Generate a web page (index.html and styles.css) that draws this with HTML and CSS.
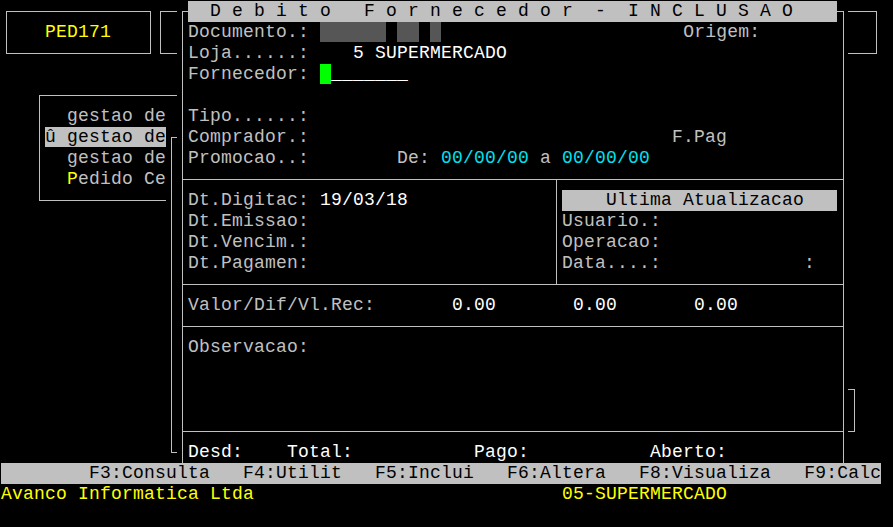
FILE: index.html
```html
<!DOCTYPE html>
<html lang="pt">
<head>
    <meta charset="UTF-8">
    <title>PED171 - Debito Fornecedor</title>
    <link rel="stylesheet" href="styles.css">
</head>
<body>
    <div class="screen">
        <div class="desk">
            <!-- program box -->
            <div class="win box-ped">
                <div class="ln">   <span class="hot">PED171</span></div>
            </div>
            <div class="win box-app"></div>

            <!-- menu behind the dialog -->
            <div class="win menu">
                <div class="ln">  gestao de</div>
                <div class="ln"><span class="hl">û gestao de</span></div>
                <div class="ln">  gestao de</div>
                <div class="ln">  <span class="hot">P</span>edido Ce</div>
            </div>
            <div class="win submenu"></div>
            <div class="win popup"></div>

            <!-- Debito Fornecedor dialog -->
            <div class="win dialog">
                <div class="ln title">  D e b i t o   F o r n e c e d o r  -  I N C L U S A O    </div>
                <div class="ln">Documento.: <span class="mask">      </span> <span class="mask">  </span> <span class="mask"> </span>                      Origem:</div>
                <div class="ln">Loja......:    <span class="val">5 SUPERMERCADO</span></div>
                <div class="ln">Fornecedor: <span class="cursor"> </span><span class="val">_______</span></div>
                <div class="ln"></div>
                <div class="ln">Tipo......:</div>
                <div class="ln">Comprador.:                                 F.Pag</div>
                <div class="ln">Promocao..:        De: <span class="date">00/00/00</span> a <span class="date">00/00/00</span></div>
                <div class="sep"></div>
                <div class="split">
                    <div class="col-left">
                        <div class="ln">Dt.Digitac: <span class="val">19/03/18</span></div>
                        <div class="ln">Dt.Emissao:</div>
                        <div class="ln">Dt.Vencim.:</div>
                        <div class="ln">Dt.Pagamen:</div>
                    </div>
                    <div class="divider"></div>
                    <div class="col-right">
                        <div class="ln bar">    Ultima Atualizacao   </div>
                        <div class="ln">Usuario.:</div>
                        <div class="ln">Operacao:</div>
                        <div class="ln">Data....:             :</div>
                    </div>
                </div>
                <div class="sep"></div>
                <div class="ln">Valor/Dif/Vl.Rec:       <span class="val">0.00</span>       <span class="val">0.00</span>       <span class="val">0.00</span></div>
                <div class="sep"></div>
                <div class="ln">Observacao:</div>
                <div class="ln"></div>
                <div class="ln"></div>
                <div class="ln"></div>
                <div class="sep"></div>
                <div class="ln val">Desd:    Total:           Pago:           Aberto:</div>
            </div>
        </div>

        <div class="ln keys">        F3:Consulta   F4:Utilit   F5:Inclui   F6:Altera   F8:Visualiza   F9:Calc</div>
        <div class="ln status">Avanco Informatica Ltda                            05-SUPERMERCADO</div>
    </div>
</body>
</html>
```

FILE: styles.css
```css
/* Terminal screen: 80 columns x 25 rows, 11px x 21px cells */
* {
    margin: 0;
    padding: 0;
    box-sizing: border-box;
}

body {
    background-color: #000;
}

.screen {
    width: 880px;
    margin: 1px 0 0 1px;
    font-family: "Liberation Mono", monospace;
    font-size: 18px;
    letter-spacing: 0.2px;
    line-height: 21px;
    color: #c0c0c0;
}

/* one text row of the terminal */
.ln {
    height: 21px;
    white-space: pre;
}

/* Window area (rows 0-21) */
.desk {
    position: relative;
    height: 462px;
    overflow: hidden;
}

.win {
    position: absolute;
    background-color: #000;
    padding: 21px 11px 0 11px;
}

/* single line frame through the cell centres */
.win::before {
    content: "";
    position: absolute;
    left: 5px;
    top: 10px;
    right: 4px;
    bottom: 10px;
    border: 1px solid #c0c0c0;
    z-index: -1;
}

.box-ped {
    left: 0;
    top: 0;
    width: 154px;
    height: 63px;
    z-index: 1;
}

.box-app {
    left: 154px;
    top: 0;
    width: 726px;
    height: 63px;
    z-index: 1;
}

.menu {
    left: 33px;
    top: 84px;
    width: 198px;
    height: 126px;
    z-index: 2;
}

.submenu {
    left: 165px;
    top: 126px;
    width: 176px;
    height: 336px;
    z-index: 3;
}

.popup {
    left: 660px;
    top: 378px;
    width: 198px;
    height: 63px;
    z-index: 3;
}

.dialog {
    left: 176px;
    top: 0;
    width: 671px;
    height: 483px;
    padding-top: 0;
    z-index: 4;
}

/* Colours */
.hot {
    color: #ffff00;
}

.hl {
    background-color: #c0c0c0;
    color: #000;
}

.val {
    color: #fff;
}

.date {
    color: #00e0f0;
}

.mask {
    background-color: #565656;
}

.cursor {
    background-color: #00ff00;
}

.title,
.bar {
    background-color: #c0c0c0;
    color: #000;
}

/* Dialog separators */
.sep {
    position: relative;
    height: 21px;
}

.sep::before {
    content: "";
    position: absolute;
    left: -6px;
    right: -7px;
    top: 10px;
    border-top: 1px solid #c0c0c0;
}

.split {
    display: flex;
}

.col-left {
    width: 363px;
}

.divider {
    position: relative;
    width: 11px;
}

.divider::before {
    content: "";
    position: absolute;
    left: 5px;
    top: -11px;
    bottom: -11px;
    border-left: 1px solid #c0c0c0;
}

.col-right {
    width: 275px;
}

/* Bottom lines */
.keys {
    background-color: #c0c0c0;
    color: #000;
}

.status {
    color: #ffff00;
}
```
